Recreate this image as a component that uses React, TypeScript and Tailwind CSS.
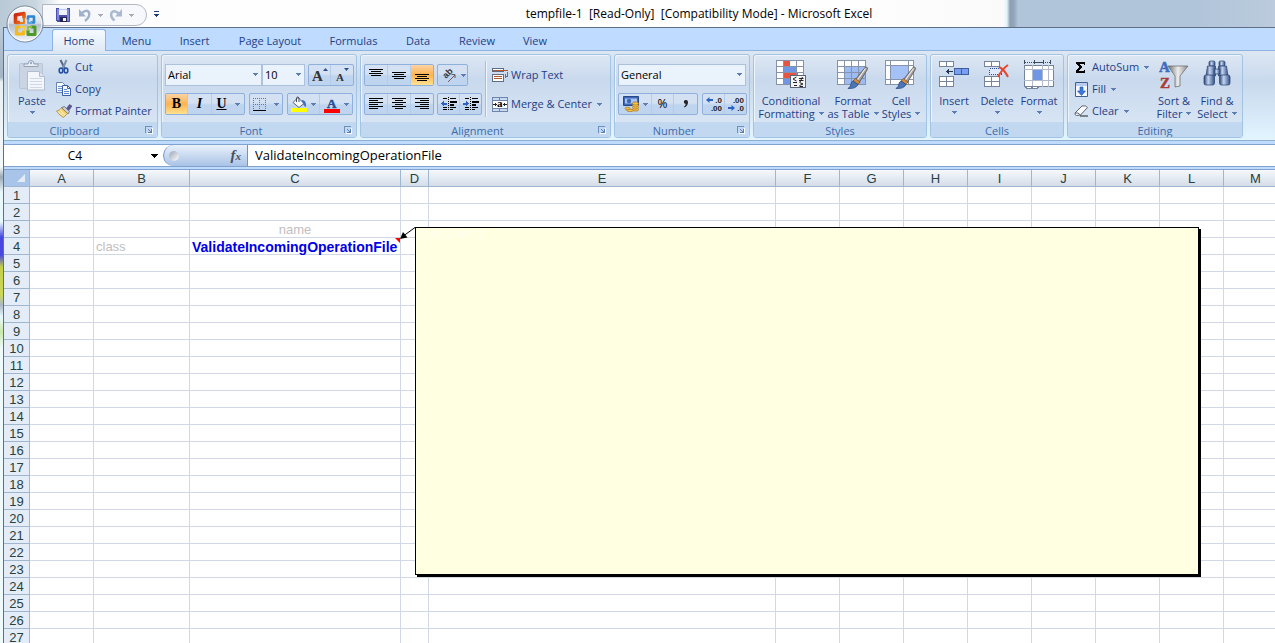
import { useState } from "react";
import type { ReactNode } from "react";
import clsx from "clsx";

const TABS = [
  { label: "Home", width: "w-[54px]" },
  { label: "Menu", width: "w-[61px]" },
  { label: "Insert", width: "w-[55px]" },
  { label: "Page Layout", width: "w-[96px]" },
  { label: "Formulas", width: "w-[71px]" },
  { label: "Data", width: "w-[58px]" },
  { label: "Review", width: "w-[60px]" },
  { label: "View", width: "w-[56px]" },
];

const COLUMNS = [
  { name: "A", width: "w-16" },
  { name: "B", width: "w-24" },
  { name: "C", width: "w-[211px]" },
  { name: "D", width: "w-7" },
  { name: "E", width: "w-[347px]" },
  { name: "F", width: "w-16" },
  { name: "G", width: "w-16" },
  { name: "H", width: "w-16" },
  { name: "I", width: "w-16" },
  { name: "J", width: "w-16" },
  { name: "K", width: "w-16" },
  { name: "L", width: "w-16" },
  { name: "M", width: "w-16" },
];

const ROWS = Array.from({ length: 27 }, (_, i) => i + 1);

const CELLS: Record<string, { text: string; className: string; comment?: boolean }> = {
  C3: { text: "name", className: "text-center text-[#c0c0c0]" },
  B4: { text: "class", className: "text-[#c0c0c0]" },
  C4: { text: "ValidateIncomingOperationFile", className: "text-sm leading-[14px] font-bold text-[#0000e6]", comment: true },
};

// ─── Icons ───────────────────────────────────────────────────────────

interface SvgProps {
  w: number;
  h: number;
  crisp?: boolean;
  children: ReactNode;
}

function Svg({ w, h, crisp, children }: SvgProps) {
  return (
    <svg
      width={w}
      height={h}
      viewBox={`0 0 ${w} ${h}`}
      fill="none"
      className="shrink-0"
      shapeRendering={crisp ? "crispEdges" : "auto"}
      aria-hidden="true"
    >
      {children}
    </svg>
  );
}

function Caret({ color = "#5b7fb5" }: { color?: string }) {
  return (
    <Svg w={5} h={3} crisp>
      <path d="M0 0h5v1h-1v1h-1v1h-1v-1h-1v-1h-1z" fill={color} />
    </Svg>
  );
}

function OfficeLogo() {
  return (
    <svg viewBox="0 0 38 38" className="size-[38px]" aria-hidden="true">
      <defs>
        <linearGradient id="orb" x1="0" y1="0" x2="0" y2="1">
          <stop offset="0" stopColor="#f6f8fb" />
          <stop offset="0.48" stopColor="#d5dbe5" />
          <stop offset="0.52" stopColor="#b4bfcf" />
          <stop offset="1" stopColor="#f3f7fc" />
        </linearGradient>
        <linearGradient id="logoRed" x1="0" y1="0" x2="1" y2="1">
          <stop offset="0" stopColor="#c8200c" />
          <stop offset="1" stopColor="#f07818" />
        </linearGradient>
      </defs>
      <circle cx="19" cy="19" r="18" fill="url(#orb)" stroke="#76859b" />
      <circle cx="19" cy="19" r="16.8" fill="none" stroke="#fff" strokeOpacity="0.8" />
      <path d="M4 17a15 15 0 0 1 30 0q-15-6-30 0" fill="#fff" fillOpacity="0.22" />
      <g fill="none" strokeLinejoin="round">
        <path d="M14 17.500h-4.500v-7.500l8.500-1.500v5" stroke="url(#logoRed)" strokeWidth="3.6" />
        <path d="M22 15v-3.500h6v6h-3.500" stroke="#2f86d2" strokeWidth="2.600" />
        <path d="M14.500 22h-4v7h7v-3.500" stroke="#f5b91c" strokeWidth="3.200" />
        <path d="M22 25v4.500h7v-7.500h-4" stroke="#4f9a26" strokeWidth="3" />
        <path d="M18 13v5h-4" stroke="#e97d16" strokeWidth="2" />
        <path d="M22 14v4h4" stroke="#5aa6e2" strokeWidth="1.800" />
        <path d="M14 22h4.500v4" stroke="#f3cf3c" strokeWidth="1.800" />
        <path d="M22 26v-4h4" stroke="#8fc03c" strokeWidth="1.800" />
      </g>
    </svg>
  );
}

function SaveIcon() {
  return (
    <Svg w={14} h={14} crisp>
      <path d="M0 0h14v14h-13l-1-1z" fill="#4a4fb0" />
      <path d="M1 1h2v11h-2zM11 1h2v12h-2z" fill="#7d86d8" />
      <path d="M3 0h8v7h-8z" fill="#eef3fb" />
      <path d="M3 1h8v1h-8z" fill="#b9cdea" />
      <path d="M4 9h7v5h-7z" fill="#23264f" />
      <path d="M7 10h3v3h-3z" fill="#f4f6fc" />
    </Svg>
  );
}

function UndoIcon() {
  return (
    <Svg w={14} h={14}>
      <path d="M3 6q5.500-5.500 8-1.500 1.500 4-4 8.500" stroke="#9fb1cb" strokeWidth="2.500" />
      <path d="M1 1v7.500h7z" fill="#9fb1cb" />
    </Svg>
  );
}

function RedoIcon() {
  return (
    <Svg w={14} h={14}>
      <path d="M10.500 6q-6-5-8-1-1.500 4 3 7.500" stroke="#a9b9cf" strokeWidth="2.500" />
      <path d="M13 1v7.500h-7z" fill="#a9b9cf" />
    </Svg>
  );
}

function PasteIcon() {
  return (
    <Svg w={26} h={31}>
      <rect x="0.5" y="3.500" width="23" height="25" rx="1" fill="#cbd4e3" stroke="#b9c4d5" />
      <path d="M5 6.500v-2.500h4q0-3.500 3-3.500t3 3.500h4v2.500z" fill="#e7ecf4" stroke="#93a1b7" />
      <circle cx="12" cy="3" r="1" fill="#8696b0" />
      <path d="M8.500 11.500h12l5 5v13.500h-17z" fill="#f3f6fb" stroke="#b0bccf" />
      <path d="M20.500 11.500v5h5" fill="#dde4ef" stroke="#b0bccf" />
      <path d="M11 18.500h12M11 21.500h12M11 24.500h12M11 27.500h12" stroke="#cdd7e6" />
    </Svg>
  );
}

function CutIcon() {
  return (
    <Svg w={14} h={16}>
      <path d="M3.500 1l4.500 9" stroke="#52647f" strokeWidth="2" />
      <path d="M9.500 1l-4 9" stroke="#7d90ab" strokeWidth="2" />
      <ellipse cx="4" cy="11.500" rx="1.800" ry="2.500" stroke="#2451a5" strokeWidth="1.600" />
      <ellipse cx="9" cy="11.500" rx="1.800" ry="2.500" stroke="#2451a5" strokeWidth="1.600" />
    </Svg>
  );
}

function CopyIcon() {
  return (
    <Svg w={16} h={14}>
      <path d="M0.500 0.500h6l3 3v7h-9z" fill="#f4f8ff" stroke="#6b83b0" />
      <path d="M2 4.500h4M2 6.500h4M2 8.500h4" stroke="#6d95d8" />
      <path d="M6.500 3.500h5l3 3v7h-8z" fill="#f4f8ff" stroke="#3b5fa6" />
      <path d="M11.500 3.500v3h3" stroke="#3b5fa6" />
      <path d="M8 7.500h3M8 9.500h5M8 11.500h5" stroke="#5d88d2" />
    </Svg>
  );
}

function PainterIcon() {
  return (
    <Svg w={16} h={14}>
      <path d="M10 5l3.500-4.500 2.500 1.500-3.500 5z" fill="#5d5596" stroke="#443d78" strokeWidth="0.500" />
      <path d="M5.500 3.500l3-1 5 5-1.500 2.500z" fill="#c9cbd2" stroke="#5f6270" strokeWidth="0.800" />
      <path d="M5.500 4l6 5.500-4 4q-4-2-7-6.500 3-.5 5-3z" fill="#f4d478" stroke="#a88433" strokeWidth="0.700" />
      <path d="M2 7.500l5 4M4 6l5 5" stroke="#fff3c4" />
    </Svg>
  );
}

function LauncherIcon() {
  return (
    <Svg w={8} h={8} crisp>
      <path d="M0 0h7v1h-6v6h-1z" fill="#6d8fbe" />
      <path d="M7 2h1v6h-6v-1h5z" fill="#fff" />
      <path d="M3 3h1v1h1v1h1v-2h1v4h-4v-1h2v-1h-1v-1h-1z" fill="#5b7fb5" />
    </Svg>
  );
}

function BordersIcon() {
  return (
    <Svg w={13} h={13} crisp>
      <path d="M0 .5h13M0 6.500h13" stroke="#6c7687" strokeDasharray="1 1" />
      <path d="M.5 0v12M6.500 0v12M12.500 0v12" stroke="#6c7687" strokeDasharray="1 1" />
      <path d="M0 12.500h13" stroke="#000" />
    </Svg>
  );
}

function FillIcon() {
  return (
    <Svg w={16} h={16}>
      <path d="M7 1.500l6 6-5 4-6-5z" fill="#f5f7fb" stroke="#5c6676" />
      <path d="M5.500 6V2q1-2.500 2.500 0v4" stroke="#444d5c" />
      <path d="M10.500 4q5-.5 4.500 7-2-.5-3-3.500z" fill="#3f70c4" />
      <path d="M0 12h16v4h-16z" fill="#ffff00" />
    </Svg>
  );
}

function AlignIcon({ lines }: { lines: [number, number, number][] }) {
  return (
    <Svg w={14} h={12} crisp>
      {lines.map(([x, y, w]) => (
        <rect key={y} x={x} y={y} width={w} height={1} fill="#000" />
      ))}
    </Svg>
  );
}

function IndentIcon({ increase }: { increase?: boolean }) {
  return (
    <Svg w={16} h={14} crisp>
      <path d="M7.500 0v14" stroke="#000" strokeDasharray="1 1" />
      <path d="M2 1h4v1h-4zM9 1h6v1h-6zM9 4h7v2h-7zM9 7h4v2h-4zM2 10h4v1h-4zM9 10h6v1h-6zM2 12h4v1h-4zM9 12h3v1h-3z" fill="#000" />
      {increase ? (
        <path d="M0 5.500h3v-2l3 3-3 3v-2h-3z" fill="#2b62c4" />
      ) : (
        <path d="M6 5.500h-3v-2l-3 3 3 3v-2h3z" fill="#2b62c4" />
      )}
    </Svg>
  );
}

function OrientationIcon() {
  return (
    <Svg w={18} h={18}>
      <text x="0" y="0" transform="translate(7 13) rotate(-45)" fontSize="9" fontWeight="700" fontFamily="Liberation Sans, sans-serif" fill="#333">
        ab
      </text>
      <path d="M9 16l7-7M16 8.500v3.500M16 8.500h-3.500" stroke="#6a5a58" />
    </Svg>
  );
}

function WrapIcon() {
  return (
    <Svg w={16} h={16} crisp>
      <path d="M.5 1.500h11v3h-11z" fill="#fff" stroke="#5d6d86" />
      <path d="M1 3h15" stroke="#b25a2b" />
      <path d="M.5 7.500h11v7h-11z" fill="#fff" stroke="#5d6d86" />
      <path d="M2 9.500h8M2 11.500h8" stroke="#b25a2b" />
      <path d="M15.500 5v4h-3M13.500 7v4" stroke="#4f74b3" />
    </Svg>
  );
}

function MergeIcon() {
  return (
    <Svg w={16} h={15} crisp>
      <path d="M.5 .5h15v14h-15z" fill="#fff" />
      <path d="M1 1h14v2h-14zM1 12h14v2h-14z" fill="#c7d9f2" />
      <path d="M.5 .5h15v14h-15z" stroke="#6f85aa" />
      <path d="M7.500 0v4M7.500 11v4M0 3.500h16M0 11.500h16" stroke="#6f85aa" />
      <path d="M1 7.500h4M11 7.500h4M3.500 6v3M12.500 6v3" stroke="#222" />
      <text x="5" y="10" fontSize="11" fontWeight="700" fontFamily="Liberation Serif, serif" fill="#000">
        a
      </text>
    </Svg>
  );
}

function CurrencyIcon() {
  return (
    <Svg w={16} h={16}>
      <path d="M.5 .5h15v9h-15z" fill="#3d68b8" stroke="#27498c" />
      <path d="M2 2.500h12v5h-12z" fill="#a9c3ee" />
      <circle cx="6" cy="5" r="2.200" fill="#3d68b8" />
      <g fill="#f6c548" stroke="#a86d12" strokeWidth="0.700">
        <ellipse cx="12.500" cy="13.500" rx="3" ry="1.600" />
        <ellipse cx="12.500" cy="11.500" rx="3" ry="1.600" />
        <ellipse cx="12.500" cy="9.500" rx="3" ry="1.600" />
        <ellipse cx="12.500" cy="7.500" rx="3" ry="1.600" />
        <ellipse cx="7" cy="14.500" rx="3" ry="1.300" />
        <ellipse cx="4.500" cy="12.500" rx="2.500" ry="1.300" />
      </g>
    </Svg>
  );
}

function DecimalIcon({ increase }: { increase?: boolean }) {
  const top = increase ? ".0" : ".00";
  const bottom = increase ? ".00" : ".0";
  return (
    <Svg w={16} h={16}>
      <g fontSize="8" fontWeight="700" fontFamily="Liberation Sans, sans-serif" fill="#222" textAnchor="end">
        <text x="16" y="7">{top}</text>
        <text x="16" y="15">{bottom}</text>
      </g>
      {increase ? (
        <path d="M0 4l3.500-3v2h3.500v2h-3.500v2z" fill="#2b62c4" />
      ) : (
        <path d="M7 12l-3.500-3v2h-3.500v2h3.500v2z" fill="#2b62c4" />
      )}
    </Svg>
  );
}

function ConditionalIcon() {
  return (
    <Svg w={30} h={29} crisp>
      <path d="M.5 .5h27v24h-27z" fill="#fff" />
      <path d="M7 1h7v6h-7z" fill="#e8543f" />
      <path d="M7 7h13v6h-13z" fill="#6f97e6" />
      <path d="M7 13h15v6h-15z" fill="#e8543f" />
      <path d="M7 19h7v6h-7z" fill="#6f97e6" />
      <path d="M.5 .5h27v24h-27zM7.500 0v25M20.500 0v25M0 6.500h28M0 12.500h28M0 18.500h28" stroke="#8792a8" />
      <path d="M14.500 15.500h15v12h-15z" fill="#f2f4f8" stroke="#5c6576" />
      <g shapeRendering="auto" stroke="#222">
        <path d="M20.500 17l-3.500 2 3.500 2M17 22.500h4" />
        <path d="M23 18.500h4.500M23 20.500h4.500M26.500 17l-2.500 5" />
        <path d="M23.500 22.500l3.500 1.500-3.500 1.500M18 25.500h3M23.500 26.500h3.500" />
      </g>
    </Svg>
  );
}

function BrushShape() {
  return (
    <>
      <path d="M28.500 7q3 0 1.500 3l-8 13-4-3z" fill="#a2a09e" stroke="#57534f" strokeWidth="0.800" />
      <path d="M28.500 8.500l-8.500 12" stroke="#efeeec" strokeWidth="1.200" />
      <path d="M18.500 18.500l4.500 3.500-2 2.500-5-3.500z" fill="#d18a43" stroke="#7c4c1d" strokeWidth="0.700" />
      <path d="M16 21l5 3.500q-2 4.500-10 4 3-2 3-5 .5-2 2-2.500z" fill="#4a76b8" stroke="#27457d" strokeWidth="0.700" />
    </>
  );
}

function FormatTableIcon() {
  return (
    <Svg w={32} h={30}>
      <g shapeRendering="crispEdges">
        <path d="M.5 .5h28v24h-28z" fill="#fff" />
        <path d="M8 7h21v18h-21z" fill="#9dbcf3" />
        <path d="M.5 .5h28v24h-28zM7.500 0v25M14.500 0v25M21.500 0v25M0 6.500h29M0 12.500h29M0 18.500h29" stroke="#8693ab" />
      </g>
      <BrushShape />
    </Svg>
  );
}

function CellStylesIcon() {
  return (
    <Svg w={32} h={30}>
      <g shapeRendering="crispEdges">
        <path d="M.5 .5h28v24h-28z" fill="#fff" />
        <path d="M.5 .5h28v24h-28zM5.500 0v25M23.500 0v25M0 5.500h29M0 19.500h29" stroke="#8693ab" />
        <path d="M6 6h17v13h-17z" fill="#a4c1f8" />
      </g>
      <BrushShape />
    </Svg>
  );
}

function InsertIcon() {
  return (
    <Svg w={30} h={28} crisp>
      <path d="M.5 1.500h14v5h-14zM.5 16.500h14v10h-14z" fill="#fff" stroke="#76849b" />
      <path d="M7.500 1v6M7.500 16v11M0 21.500h15" stroke="#76849b" />
      <path d="M15.500 8.500h14v6h-14z" fill="#7b9ff0" stroke="#3e5d9e" />
      <path d="M22.500 8v7" stroke="#3e5d9e" />
      <path d="M7 11.500h7M9.500 9v5M8.500 10v3" stroke="#23354f" />
    </Svg>
  );
}

function DeleteIcon() {
  return (
    <Svg w={26} h={28}>
      <g shapeRendering="crispEdges">
        <path d="M.5 1.500h15v5h-15zM.5 16.500h15v10h-15z" fill="#fff" stroke="#76849b" />
        <path d="M7.500 1v6M7.500 16v11M0 21.500h16" stroke="#76849b" />
        <path d="M5.500 8.500h12v6h-12z" fill="#dfeaff" stroke="#2f4f9c" strokeDasharray="1 1" />
      </g>
      <path d="M15 7q5 2 9 10M24 5q-6 4-10 12" stroke="#e8452c" strokeWidth="2" />
    </Svg>
  );
}

function FormatIcon() {
  return (
    <Svg w={32} h={30} crisp>
      <path d="M1.500 0v4M11.500 0v4M20.500 0v4M27.500 0v4" stroke="#3e4b60" />
      <path d="M2 2h10M20 2h8" stroke="#3e4b60" strokeDasharray="1 1" />
      <path d="M12 2h8" stroke="#3e4b60" />
      <path d="M1.500 5.500h29v21h-29z" fill="#fff" stroke="#76849b" />
      <path d="M9.500 5v22M19.500 5v22M25.500 5v22M1 9.500h30M1 20.500h30" stroke="#b0bacb" />
      <path d="M10 10h9v10h-9z" fill="#6f97e6" />
      <path d="M2.500 26.500h6v2h-5zM9.500 26.500h6l-1 2h-5z" fill="#fff" stroke="#76849b" />
    </Svg>
  );
}

function SigmaIcon() {
  return (
    <Svg w={10} h={11} crisp>
      <path d="M0 0h9v3h-1v-1h-4l2 3-3 4h5v-1h1v3h-9v-2l3-4-3-3z" fill="#000" />
    </Svg>
  );
}

function FillDownIcon() {
  return (
    <Svg w={13} h={15}>
      <path d="M.5 .5h12v14h-12z" fill="#f4f8ff" stroke="#42608f" />
      <path d="M1 1h11v3h-11z" fill="#b8cdf0" />
      <path d="M5 5h3v4h2.500l-4 4.500-4-4.500h2.500z" fill="#3c78e0" stroke="#2450a8" strokeWidth="0.600" />
    </Svg>
  );
}

function EraserIcon() {
  return (
    <Svg w={15} h={12}>
      <path d="M1 8l7-7q4-1 5.500 1.500l-7 7.500-4 .5q-2-.5-1.500-2.500z" fill="#fbfbfd" stroke="#5b6474" />
      <path d="M1 8q3-1 5.500 2" stroke="#5b6474" />
      <path d="M6 11h8" stroke="#222" strokeWidth="1" />
    </Svg>
  );
}

function SortIcon() {
  return (
    <Svg w={30} h={31}>
      <defs>
        <linearGradient id="funnel" x1="0" x2="1" y1="0" y2="0">
          <stop offset="0" stopColor="#6d6d6d" />
          <stop offset="0.5" stopColor="#ededed" />
          <stop offset="1" stopColor="#8b8b8b" />
        </linearGradient>
      </defs>
      <g fontSize="15" fontWeight="700" fontFamily="Liberation Serif, serif">
        <text x="0" y="12" fill="#3d6cc0" stroke="#3d6cc0" strokeWidth="0.500">A</text>
        <text x="1" y="28" fill="#a83a36" stroke="#a83a36" strokeWidth="0.500">Z</text>
      </g>
      <path d="M9 6h20l-8 10v10l-5 1v-11z" fill="url(#funnel)" stroke="#666" strokeWidth="0.700" />
    </Svg>
  );
}

function BinocularsIcon() {
  return (
    <Svg w={28} h={26}>
      <defs>
        <linearGradient id="barrel" x1="0" x2="1" y1="0" y2="0">
          <stop offset="0" stopColor="#2c4678" />
          <stop offset="0.4" stopColor="#c3d5f0" />
          <stop offset="1" stopColor="#324f86" />
        </linearGradient>
      </defs>
      <g fill="url(#barrel)" stroke="#27406f" strokeWidth="0.700">
        <rect x="6" y="1" width="6" height="5" rx="1.500" />
        <rect x="16" y="1" width="6" height="5" rx="1.500" />
        <path d="M4.500 6h8v10h-9.500z" />
        <path d="M15.500 6h8l1.500 10h-9.500z" />
        <rect x="11" y="9" width="6" height="5" />
        <rect x="1" y="15" width="10.500" height="10" rx="2" />
        <rect x="16.500" y="15" width="10.500" height="10" rx="2" />
      </g>
    </Svg>
  );
}

// ─── Ribbon pieces ───────────────────────────────────────────────────

function RibbonGroup({ label, width, launcher, children }: { label: string; width: string; launcher?: boolean; children: ReactNode }) {
  return (
    <section
      aria-label={label}
      className={clsx(
        "flex shrink-0 flex-col overflow-hidden rounded-[3px] border border-[#a3c3e2] bg-linear-to-b from-[#dde7f3] from-0% via-[#c9d9ed] via-30% to-[#dbe8f6] shadow-[inset_1px_1px_0_#eef4fb]",
        width
      )}
    >
      <div className="flex flex-1">{children}</div>
      <div className="flex h-[15px] items-center bg-[#c1d8f0] px-1 text-[#3e6aaa]">
        <span className={clsx("flex-1 pt-[2px] text-center leading-[13px]", launcher && "pr-2")}>{label}</span>
        {launcher && (
          <button aria-label={`${label} settings`}>
            <LauncherIcon />
          </button>
        )}
      </div>
    </section>
  );
}

function ButtonBox({ children }: { children: ReactNode }) {
  return (
    <div className="flex h-[22px] divide-x divide-[#b5cce9] overflow-hidden rounded-[2px] border border-[#8fb0db] bg-linear-to-b from-[#d3e1f3] from-45% to-[#bfd4ee] to-55%">
      {children}
    </div>
  );
}

function ToolButton({ label, width = "w-[22px]", active, children }: { label: string; width?: string; active?: boolean; children: ReactNode }) {
  return (
    <button
      aria-label={label}
      aria-pressed={active}
      className={clsx(
        "flex items-center justify-center gap-1",
        width,
        active && "bg-linear-to-b from-[#fbd3a0] via-[#fdb24e] via-50% to-[#ffe28e]"
      )}
    >
      {children}
    </button>
  );
}

function SmallButton({ icon, label, caret }: { icon: ReactNode; label: string; caret?: boolean }) {
  return (
    <button className="flex h-[22px] items-center gap-[3px] whitespace-nowrap">
      <span className="flex w-4 justify-center">{icon}</span>
      {label}
      {caret && (
        <span className="ml-0.5">
          <Caret />
        </span>
      )}
    </button>
  );
}

function BigButton({ icon, lines, width, caretBelow }: { icon: ReactNode; lines: string[]; width: string; caretBelow?: boolean }) {
  return (
    <button className={clsx("flex shrink-0 flex-col items-center whitespace-nowrap pt-[5px] leading-[13px]", width)}>
      <span className="flex h-[34px] items-start justify-center">{icon}</span>
      {lines.map((line, i) => (
        <span key={line} className="flex items-center gap-1">
          {line}
          {!caretBelow && i === lines.length - 1 && <Caret />}
        </span>
      ))}
      {caretBelow && (
        <span className="mt-1">
          <Caret />
        </span>
      )}
    </button>
  );
}

function Combo({ label, value, width }: { label: string; value: string; width: string }) {
  return (
    <div className={clsx("relative h-[22px]", width)}>
      <select
        aria-label={label}
        defaultValue={value}
        className="size-full appearance-none border border-[#abc1de] bg-[#eaf2fb] pl-[2px] text-black outline-none"
      >
        <option>{value}</option>
      </select>
      <span className="pointer-events-none absolute top-[9px] right-[4px]">
        <Caret />
      </span>
    </div>
  );
}

function TitleBar() {
  return (
    <header className="flex h-[27px] items-center bg-[linear-gradient(to_right,#b9c9d6_0,#c9d6e0_36px,#fdfdfd_60px,#ffffff_800px,#fafafa_1004px,#dff3fa_1007px,#8e9fb4_1010px,#93a5ba_1014px,#b1c5da_1018px,#b1c5da_1200px,#bccbdd_1275px)] pl-[42px]">
      <div className="mt-[3px] flex h-[22px] w-[105px] items-center gap-1.5 rounded-r-full border border-[#b3b9c4] bg-[#f7f8fb] pl-[13px]">
        <button aria-label="Save"><SaveIcon /></button>
        <button aria-label="Undo" className="ml-[2px]"><UndoIcon /></button>
        <Caret color="#a9adb5" />
        <button aria-label="Redo"><RedoIcon /></button>
        <Caret color="#a9adb5" />
      </div>
      <button aria-label="Customize Quick Access Toolbar" className="ml-[7px] flex flex-col gap-[2px]">
        <span className="h-px w-[5px] bg-[#1e3c78]" />
        <Caret color="#1e3c78" />
      </button>
      <h1 className="flex-1 pr-[36px] text-center text-[12px] whitespace-pre text-black">
        {"tempfile-1  [Read-Only]  [Compatibility Mode] - Microsoft Excel"}
      </h1>
    </header>
  );
}

function TabStrip({ active, onSelect }: { active: string; onSelect: (tab: string) => void }) {
  return (
    <nav className="flex h-[23px] items-end border-b border-[#8db2e3] bg-[#bfdbff] pl-12">
      {TABS.map((tab) => (
        <button
          key={tab.label}
          onClick={() => onSelect(tab.label)}
          className={clsx(
            "shrink-0 rounded-t-[3px] border-x border-t",
            tab.width,
            tab.label === active
              ? "-mb-px h-[22px] border-[#8db2e3] bg-linear-to-b from-[#f6fafe] to-[#dfe9f5] pt-px"
              : "h-[21px] border-transparent pt-[2px]"
          )}
        >
          {tab.label}
        </button>
      ))}
    </nav>
  );
}

function Ribbon() {
  return (
    <div className="flex h-[90px] gap-[3px] overflow-hidden border-b border-[#8fb0cf] bg-linear-to-b from-[#dde7f3] via-[#c8d9ed] via-35% to-[#e2f5ff] px-[3px] pt-[3px] pb-[2px]">
      <RibbonGroup label="Clipboard" width="w-[151px]" launcher>
        <BigButton icon={<PasteIcon />} lines={["Paste"]} width="w-12" caretBelow />
        <div className="flex flex-col pt-px">
          <SmallButton icon={<CutIcon />} label="Cut" />
          <SmallButton icon={<CopyIcon />} label="Copy" />
          <SmallButton icon={<PainterIcon />} label="Format Painter" />
        </div>
      </RibbonGroup>

      <RibbonGroup label="Font" width="w-[196px]" launcher>
        <div className="flex flex-col gap-[7px] pt-[9px] pl-[3px]">
          <div className="flex">
            <Combo label="Font" value="Arial" width="w-[97px]" />
            <Combo label="Font size" value="10" width="w-[43px]" />
            <div className="ml-[3px]">
              <ButtonBox>
                <ToolButton label="Grow font">
                  <Svg w={16} h={16}>
                    <text x="0" y="14" fontSize="15" fontWeight="700" fontFamily="Liberation Serif, serif" fill="#333">A</text>
                    <path d="M11 4l2.500-3 2.500 3z" fill="#2b4f92" />
                  </Svg>
                </ToolButton>
                <ToolButton label="Shrink font">
                  <Svg w={16} h={16}>
                    <text x="2" y="14" fontSize="11" fontWeight="700" fontFamily="Liberation Serif, serif" fill="#333">A</text>
                    <path d="M10 1h5l-2.500 3z" fill="#2b4f92" />
                  </Svg>
                </ToolButton>
              </ButtonBox>
            </div>
          </div>
          <div className="flex gap-[4px]">
            <ButtonBox>
              <ToolButton label="Bold" active>
                <span className="font-['Liberation_Serif',serif] text-sm font-bold text-black">B</span>
              </ToolButton>
              <ToolButton label="Italic" width="w-6">
                <span className="font-['Liberation_Serif',serif] text-sm font-bold text-black italic">I</span>
              </ToolButton>
              <ToolButton label="Underline" width="w-8">
                <span className="mr-1 font-['Liberation_Serif',serif] text-sm font-bold text-black underline">U</span>
                <Caret />
              </ToolButton>
            </ButtonBox>
            <ButtonBox>
              <ToolButton label="Borders" width="w-8">
                <BordersIcon />
                <span className="ml-1"><Caret /></span>
              </ToolButton>
            </ButtonBox>
            <ButtonBox>
              <ToolButton label="Fill color" width="w-8">
                <FillIcon />
                <Caret />
              </ToolButton>
              <ToolButton label="Font color" width="w-8">
                <Svg w={16} h={17}>
                  <text x="3" y="12" fontSize="13" fontWeight="700" fontFamily="Liberation Serif, serif" fill="#2b4f92" stroke="#2b4f92" strokeWidth="0.500">A</text>
                  <path d="M0 13h16v4h-16z" fill="#ff0000" />
                </Svg>
                <Caret />
              </ToolButton>
            </ButtonBox>
          </div>
        </div>
      </RibbonGroup>

      <RibbonGroup label="Alignment" width="w-[251px]" launcher>
        <div className="flex flex-col gap-[7px] pt-[9px] pl-[3px]">
          <div className="flex gap-[3px]">
            <ButtonBox>
              <ToolButton label="Top align" width="w-[23px]"><AlignIcon lines={[[0, 0, 14], [2, 2, 10], [0, 4, 14], [2, 6, 10]]} /></ToolButton>
              <ToolButton label="Middle align" width="w-[23px]"><AlignIcon lines={[[0, 3, 14], [2, 5, 10], [0, 7, 14], [2, 9, 10]]} /></ToolButton>
              <ToolButton label="Bottom align" active><AlignIcon lines={[[0, 5, 14], [2, 7, 10], [0, 9, 14], [2, 11, 10]]} /></ToolButton>
            </ButtonBox>
            <ButtonBox>
              <ToolButton label="Orientation" width="w-[29px]"><OrientationIcon /><Caret /></ToolButton>
            </ButtonBox>
          </div>
          <div className="flex gap-[3px]">
            <ButtonBox>
              <ToolButton label="Align left" width="w-[23px]"><AlignIcon lines={[[0, 0, 14], [0, 2, 9], [0, 4, 14], [0, 6, 9], [0, 8, 14], [0, 10, 9]]} /></ToolButton>
              <ToolButton label="Center" width="w-[23px]"><AlignIcon lines={[[0, 0, 14], [3, 2, 8], [0, 4, 14], [3, 6, 8], [0, 8, 14], [3, 10, 8]]} /></ToolButton>
              <ToolButton label="Align right"><AlignIcon lines={[[0, 0, 14], [5, 2, 9], [0, 4, 14], [5, 6, 9], [0, 8, 14], [5, 10, 9]]} /></ToolButton>
            </ButtonBox>
            <ButtonBox>
              <ToolButton label="Decrease indent"><IndentIcon /></ToolButton>
              <ToolButton label="Increase indent" width="w-[21px]"><IndentIcon increase /></ToolButton>
            </ButtonBox>
          </div>
        </div>
        <div className="mt-[6px] ml-[3px] h-[56px] w-px shrink-0 bg-[#a3bfdf] shadow-[1px_0_0_#eef5fc]" />
        <div className="flex flex-col gap-[7px] pt-[9px] pl-[6px]">
          <SmallButton icon={<WrapIcon />} label="Wrap Text" />
          <SmallButton icon={<MergeIcon />} label="Merge & Center" caret />
        </div>
      </RibbonGroup>

      <RibbonGroup label="Number" width="w-[136px]" launcher>
        <div className="flex flex-col gap-[7px] pt-[9px] pl-[3px]">
          <Combo label="Number format" value="General" width="w-32" />
          <div className="flex gap-[4px]">
            <ButtonBox>
              <ToolButton label="Accounting format" width="w-[33px]"><CurrencyIcon /><Caret /></ToolButton>
              <ToolButton label="Percent"><span className="text-[12px] text-black">%</span></ToolButton>
              <ToolButton label="Comma" width="w-[23px]">
                <Svg w={6} h={8}>
                  <path d="M3 0a2 2 0 0 1 2 2q0 3.500-3.500 5.500l-.5-.7q1.700-1.300 1.700-2.800a2 2 0 0 1 .3-4z" fill="#222" />
                </Svg>
              </ToolButton>
            </ButtonBox>
            <ButtonBox>
              <ToolButton label="Increase decimal"><DecimalIcon increase /></ToolButton>
              <ToolButton label="Decrease decimal" width="w-[21px]"><DecimalIcon /></ToolButton>
            </ButtonBox>
          </div>
        </div>
      </RibbonGroup>

      <RibbonGroup label="Styles" width="w-[174px]">
        <BigButton icon={<ConditionalIcon />} lines={["Conditional", "Formatting"]} width="w-[74px]" />
        <BigButton icon={<FormatTableIcon />} lines={["Format", "as Table"]} width="w-[50px]" />
        <BigButton icon={<CellStylesIcon />} lines={["Cell", "Styles"]} width="w-[46px]" />
      </RibbonGroup>

      <RibbonGroup label="Cells" width="w-[134px]">
        <BigButton icon={<InsertIcon />} lines={["Insert"]} width="w-[46px]" caretBelow />
        <BigButton icon={<DeleteIcon />} lines={["Delete"]} width="w-[40px]" caretBelow />
        <BigButton icon={<FormatIcon />} lines={["Format"]} width="w-[44px]" caretBelow />
      </RibbonGroup>

      <RibbonGroup label="Editing" width="w-[176px]">
        <div className="flex w-[84px] shrink-0 flex-col pt-px pl-[5px]">
          <SmallButton icon={<SigmaIcon />} label="AutoSum" caret />
          <SmallButton icon={<FillDownIcon />} label="Fill" caret />
          <SmallButton icon={<EraserIcon />} label="Clear" caret />
        </div>
        <BigButton icon={<SortIcon />} lines={["Sort &", "Filter"]} width="w-[44px]" />
        <BigButton icon={<BinocularsIcon />} lines={["Find &", "Select"]} width="w-[42px]" />
      </RibbonGroup>
    </div>
  );
}

function FormulaBar() {
  const [formula, setFormula] = useState("ValidateIncomingOperationFile");

  return (
    <div className="mt-[3px] flex h-[23px] border-y border-[#7fa3cc] bg-white text-black">
      <input aria-label="Name box" defaultValue="C4" className="w-[142px] bg-white text-center text-[12px] outline-none" />
      <button aria-label="Show names" className="flex w-[17px] items-center justify-center">
        <Svg w={7} h={4} crisp>
          <path d="M0 0h7l-3 4h-1z" fill="#000" />
        </Svg>
      </button>
      <div className="flex w-[85px] items-center justify-between rounded-l-full border-r border-l border-[#6f93c4] bg-linear-to-b from-[#e9f1fb] to-[#a9c3e6] pr-1.5 pl-[5px]">
        <span className="size-2.5 rounded-full bg-linear-to-br from-[#9ba5b5] to-white" />
        <button aria-label="Insert function" className="font-['Liberation_Serif',serif] text-[15px] leading-4 font-bold text-[#4a4f5a] italic">
          f<span className="text-[11px]">x</span>
        </button>
      </div>
      <input
        aria-label="Formula"
        value={formula}
        onChange={(e) => setFormula(e.target.value)}
        className="min-w-0 flex-1 bg-white pl-[7px] text-[13px] outline-none"
      />
    </div>
  );
}

function CommentNote() {
  return (
    <>
      <div className="absolute top-[57px] left-[411px] h-[348px] w-[784px] border border-black bg-[#ffffe1] pl-[2px] font-['DejaVu_Sans',sans-serif] text-[10px] leading-4 text-[#fffff2] shadow-[2px_2px_0_#000]">
        CLASS INPUT
      </div>
      <svg width="18" height="16" viewBox="0 0 18 16" className="absolute top-[56px] left-[394px]" aria-hidden="true">
        <path d="M17 1.500l-11 8" stroke="#000" />
        <path d="M2 13l3-7 4.500 5.500z" fill="#000" />
      </svg>
    </>
  );
}

function Sheet() {
  return (
    <div className="relative mt-[2px] flex-1 overflow-hidden border-t border-[#7fa3cc] bg-white">
      <table className="w-[1246px] table-fixed border-separate border-spacing-0 font-['Liberation_Sans',Arial,sans-serif] text-[13px] leading-[14px] text-[#27413e]">
        <thead>
          <tr className="h-[17px]">
            <th className="w-[26px] border-r border-b border-[#9eb6ce] bg-[#a9c4e9] p-0">
              <svg width="8" height="8" viewBox="0 0 8 8" className="mr-1 ml-auto block" aria-hidden="true">
                <path d="M8 0v8h-8z" fill="#e4ecf7" />
              </svg>
            </th>
            {COLUMNS.map((col) => (
              <th
                key={col.name}
                className={clsx("border-r border-b border-[#9eb6ce] bg-linear-to-b from-[#f6f9fc] to-[#d5dde9] px-0 pt-[2px] pb-0 font-normal", col.width)}
              >
                {col.name}
              </th>
            ))}
          </tr>
        </thead>
        <tbody>
          {ROWS.map((row) => (
            <tr key={row} className="h-[17px]">
              <th className="border-r border-b border-[#9eb6ce] bg-[#e4ecf7] px-0 pt-[2px] pb-0 font-normal">{row}</th>
              {COLUMNS.map((col) => {
                const cell = CELLS[`${col.name}${row}`];
                return (
                  <td key={col.name} className={clsx("relative border-r border-b border-[#d0d7e5] px-[2px] pt-[2px] pb-0 whitespace-nowrap", cell?.className)}>
                    {cell?.text}
                    {cell?.comment && (
                      <span className="absolute top-0 right-0 border-t-[5px] border-l-[5px] border-t-[#f00] border-l-transparent" />
                    )}
                  </td>
                );
              })}
            </tr>
          ))}
        </tbody>
      </table>
      <CommentNote />
    </div>
  );
}

export default function App() {
  const [tab, setTab] = useState("Home");

  return (
    <div className="relative flex h-screen flex-col overflow-hidden bg-[#bfdbff] font-['Open_Sans','Noto_Sans',sans-serif] text-[11px] text-[#1e3f87]">
      <TitleBar />
      <div className="flex min-h-0 flex-1">
        {/* sliver of the desktop left of the window frame */}
        <div className="w-[3px] shrink-0 bg-[linear-gradient(to_bottom,#b9c9d6_0,#a3b4c4_50px,#e8f0f4_55px,#f4f9fb_140px,#9aa8b4_150px,#e8f8fb_165px,#e8f8fb_195px,#4848e0_210px,#4848e0_228px,#c3d048_240px,#ccd858_268px,#a8b8c8_278px,#eafaff_290px,#c8e8a8_305px,#eefafc_320px)]" />
        <div className="flex min-w-0 flex-1 flex-col border-t border-l border-[#5f6f86]">
          <TabStrip active={tab} onSelect={setTab} />
          <Ribbon />
          <FormulaBar />
          <Sheet />
        </div>
      </div>
      <button aria-label="Office Button" className="absolute top-[5px] left-[6px]">
        <OfficeLogo />
      </button>
    </div>
  );
}
